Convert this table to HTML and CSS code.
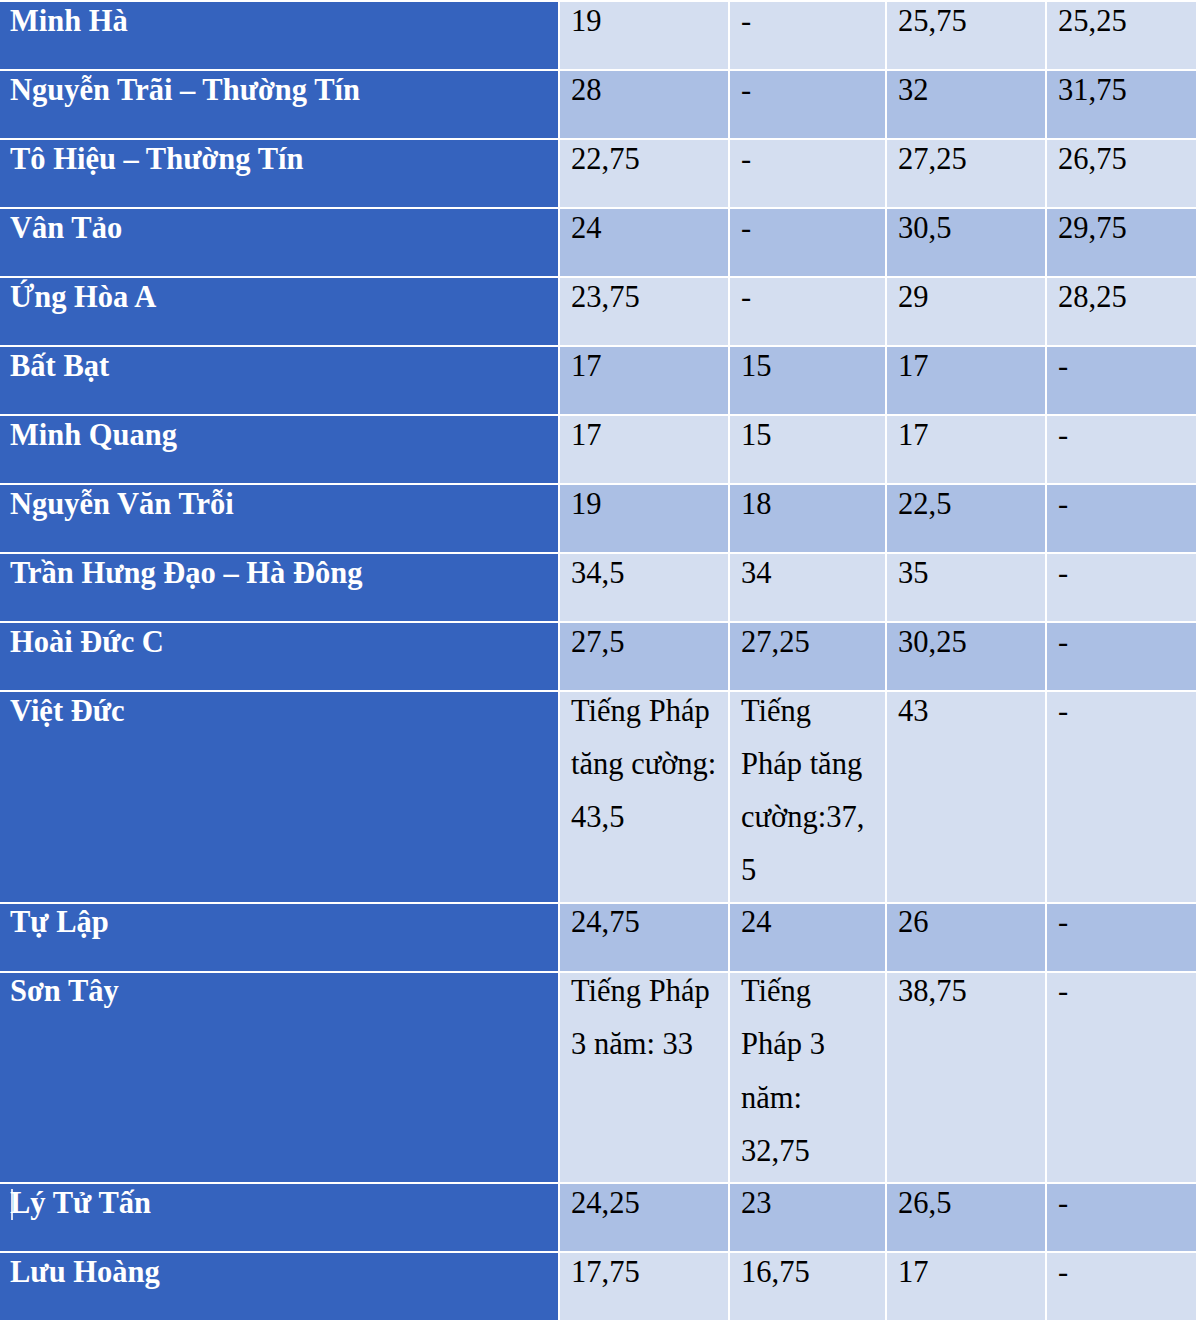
FILE: index.html
```html
<!DOCTYPE html>
<html lang="vi">
<head>
<meta charset="utf-8">
<title>Điểm chuẩn</title>
<link rel="stylesheet" href="styles.css">
</head>
<body>
<table class="scores">
  <colgroup>
    <col class="c-name"><col class="c-a"><col class="c-b"><col class="c-c"><col class="c-d">
  </colgroup>
  <tbody>
    <tr class="light"><th><div class="t">Minh Hà</div></th><td><div class="t">19</div></td><td><div class="t">-</div></td><td><div class="t">25,75</div></td><td><div class="t">25,25</div></td></tr>
    <tr class="mid"><th><div class="t">Nguyễn Trãi – Thường Tín</div></th><td><div class="t">28</div></td><td><div class="t">-</div></td><td><div class="t">32</div></td><td><div class="t">31,75</div></td></tr>
    <tr class="light"><th><div class="t">Tô Hiệu – Thường Tín</div></th><td><div class="t">22,75</div></td><td><div class="t">-</div></td><td><div class="t">27,25</div></td><td><div class="t">26,75</div></td></tr>
    <tr class="mid"><th><div class="t">Vân Tảo</div></th><td><div class="t">24</div></td><td><div class="t">-</div></td><td><div class="t">30,5</div></td><td><div class="t">29,75</div></td></tr>
    <tr class="light"><th><div class="t">Ứng Hòa A</div></th><td><div class="t">23,75</div></td><td><div class="t">-</div></td><td><div class="t">29</div></td><td><div class="t">28,25</div></td></tr>
    <tr class="mid"><th><div class="t">Bất Bạt</div></th><td><div class="t">17</div></td><td><div class="t">15</div></td><td><div class="t">17</div></td><td><div class="t">-</div></td></tr>
    <tr class="light"><th><div class="t">Minh Quang</div></th><td><div class="t">17</div></td><td><div class="t">15</div></td><td><div class="t">17</div></td><td><div class="t">-</div></td></tr>
    <tr class="mid"><th><div class="t">Nguyễn Văn Trỗi</div></th><td><div class="t">19</div></td><td><div class="t">18</div></td><td><div class="t">22,5</div></td><td><div class="t">-</div></td></tr>
    <tr class="light"><th><div class="t">Trần Hưng Đạo – Hà Đông</div></th><td><div class="t">34,5</div></td><td><div class="t">34</div></td><td><div class="t">35</div></td><td><div class="t">-</div></td></tr>
    <tr class="mid"><th><div class="t">Hoài Đức C</div></th><td><div class="t">27,5</div></td><td><div class="t">27,25</div></td><td><div class="t">30,25</div></td><td><div class="t">-</div></td></tr>
    <tr class="light"><th><div class="t">Việt Đức</div></th><td><div class="t">Tiếng Pháp<br>tăng cường:<br>43,5</div></td><td><div class="t">Tiếng<br>Pháp tăng<br>cường:37,<br>5</div></td><td><div class="t">43</div></td><td><div class="t">-</div></td></tr>
    <tr class="mid"><th><div class="t">Tự Lập</div></th><td><div class="t">24,75</div></td><td><div class="t">24</div></td><td><div class="t">26</div></td><td><div class="t">-</div></td></tr>
    <tr class="light"><th><div class="t">Sơn Tây</div></th><td><div class="t">Tiếng Pháp<br>3 năm: 33</div></td><td><div class="t">Tiếng<br>Pháp 3<br>năm:<br>32,75</div></td><td><div class="t">38,75</div></td><td><div class="t">-</div></td></tr>
    <tr class="mid"><th><div class="t"><span class="caret"></span>Lý Tử Tấn</div></th><td><div class="t">24,25</div></td><td><div class="t">23</div></td><td><div class="t">26,5</div></td><td><div class="t">-</div></td></tr>
    <tr class="light"><th><div class="t">Lưu Hoàng</div></th><td><div class="t">17,75</div></td><td><div class="t">16,75</div></td><td><div class="t">17</div></td><td><div class="t">-</div></td></tr>
  </tbody>
</table>
</body>
</html>
```

FILE: styles.css
```css
html, body {
  margin: 0;
  padding: 0;
  background: #ffffff;
  overflow: hidden;
}

.scores {
  border-collapse: separate;
  border-spacing: 2px;
  table-layout: fixed;
  margin-left: -2px;
  width: 1202px;
  font-family: "Liberation Serif", "Times New Roman", serif;
  font-size: 30.5px;
  color: #000000;
}

.c-name { width: 558px; }
.c-a { width: 168px; }
.c-b { width: 155px; }
.c-c { width: 158px; }
.c-d { width: 151px; }

.scores th,
.scores td {
  box-sizing: border-box;
  height: 67px;
  padding: 0 4px 4px 11px;
  vertical-align: top;
  text-align: left;
  font-weight: normal;
}

.scores th {
  background: #3563be;
  color: #ffffff;
  font-weight: bold;
  padding-left: 10px;
}

.light td { background: #d4def0; }
.mid td { background: #abbfe4; }

.t {
  line-height: 53.3px;
  margin-top: -7.5px;
  white-space: nowrap;
}

.caret {
  display: inline-block;
  width: 2px;
  height: 31px;
  background: #d8e0f2;
  vertical-align: -7px;
  margin-left: 1px;
  margin-right: -3px;
}
```
